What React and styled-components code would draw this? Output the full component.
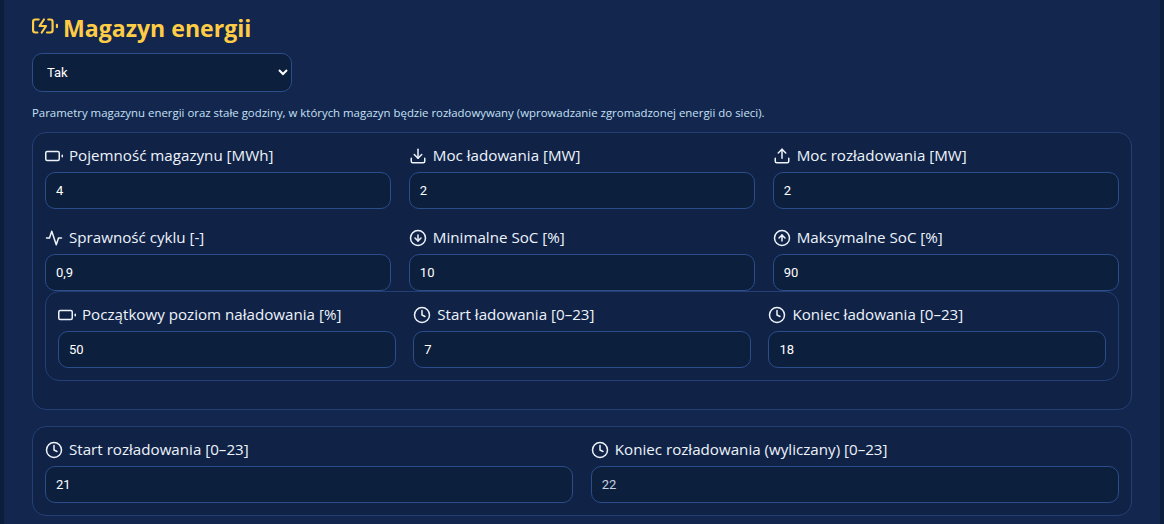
import styled, { createGlobalStyle } from "styled-components";

const GlobalStyle = createGlobalStyle`
  html, body { margin: 0; padding: 0; height: 100%; background: #0b1e3b; overflow: hidden; }
  body { font-family: "Open Sans", "Noto Sans", sans-serif; }
`;

const Page = styled.div`
  margin: 0 4px;
  height: 524px;
  background: #12264e;
  padding: 0 28px;
  box-sizing: border-box;
  overflow: hidden;
`;

const Title = styled.h2`
  display: flex;
  align-items: center;
  gap: 5px;
  margin: 0;
  padding-top: 16px;
  height: 39px;
  box-sizing: border-box;
  color: #ffcd45;
  font-size: 23.1px;
  font-weight: 700;
  font-family: "Open Sans", sans-serif;
  svg { flex: none; margin-top: -4px; }
`;

const SelectBox = styled.select`
  display: block;
  width: 260px;
  height: 39px;
  margin-top: 14px;
  padding: 0 10px;
  background: #0c1f3d;
  border: 1px solid #2b4d8a;
  border-radius: 10px;
  color: #fff;
  font: 400 13px Roboto, sans-serif;
`;

const Hint = styled.p`
  margin: 13px 0 11px;
  color: #c5e0f5;
  font: 400 11.42px/16px "Open Sans", sans-serif;
`;

const Card = styled.section`
  background: #102347;
  border: 1px solid #233f74;
  border-radius: 14px;
  padding: ${(p) => p.$pad || "12px"};
  margin-bottom: ${(p) => p.$mb || "16px"};
`;

const Grid = styled.div`
  display: grid;
  grid-template-columns: repeat(${(p) => p.$cols}, 1fr);
  column-gap: 17.6px;
  row-gap: ${(p) => p.$rowGap || "0"};
`;

const Field = styled.div`
  display: flex;
  flex-direction: column;
  min-width: 0;
`;

const Label = styled.label`
  display: flex;
  align-items: center;
  gap: 6px;
  height: 22px;
  box-sizing: border-box;
  padding-bottom: 2px;
  margin-bottom: 5px;
  color: #eef3fb;
  font-size: 15.15px;
  white-space: nowrap;
  svg { flex: none; margin-top: 2px; }
`;

const Input = styled.input`
  width: 100%;
  height: 37px;
  box-sizing: border-box;
  padding: 0 10px;
  background: #0c1f3d;
  border: 1px solid #2b4d8a;
  border-radius: 10px;
  color: ${(p) => (p.readOnly ? "#c6d2e2" : "#fff")};
  font: 400 13px Roboto, sans-serif;
  outline: none;
`;

const Icon = ({ children, size = 18, sw = 2 }) => (
  <svg width={size} height={size} viewBox="0 0 24 24" fill="none" stroke="currentColor" strokeWidth={sw} strokeLinecap="round" strokeLinejoin="round">
    {children}
  </svg>
);

const Battery = () => (
  <Icon><rect x="1" y="6" width="18" height="12" rx="2" /><line x1="23" y1="13" x2="23" y2="11" /></Icon>
);
const Download = () => (
  <Icon><path d="M21 15v4a2 2 0 0 1-2 2H5a2 2 0 0 1-2-2v-4" /><polyline points="7 10 12 15 17 10" /><line x1="12" y1="15" x2="12" y2="3" /></Icon>
);
const Upload = () => (
  <Icon><path d="M21 15v4a2 2 0 0 1-2 2H5a2 2 0 0 1-2-2v-4" /><polyline points="17 8 12 3 7 8" /><line x1="12" y1="3" x2="12" y2="15" /></Icon>
);
const Activity = () => (
  <Icon><polyline points="22 12 18 12 15 21 9 3 6 12 2 12" /></Icon>
);
const ArrowDown = () => (
  <Icon><circle cx="12" cy="12" r="10" /><polyline points="8 12 12 16 16 12" /><line x1="12" y1="8" x2="12" y2="16" /></Icon>
);
const ArrowUp = () => (
  <Icon><circle cx="12" cy="12" r="10" /><polyline points="16 12 12 8 8 12" /><line x1="12" y1="16" x2="12" y2="8" /></Icon>
);
const Clock = () => (
  <Icon><circle cx="12" cy="12" r="10" /><polyline points="12 6 12 12 16 14" /></Icon>
);
const BatteryCharging = () => (
  <svg width="26" height="26" viewBox="0 0 24 24" fill="none" stroke="currentColor" strokeWidth="2" strokeLinecap="round" strokeLinejoin="round">
    <path d="M5 18H3a2 2 0 0 1-2-2V8a2 2 0 0 1 2-2h3.19" />
    <path d="M15 6h2a2 2 0 0 1 2 2v8a2 2 0 0 1-2 2h-3.19" />
    <line x1="23" y1="13" x2="23" y2="11" />
    <polyline points="11 6 7 12 13 12 9 18" />
  </svg>
);

const NumberField = ({ icon, label, value, readOnly }) => (
  <Field>
    <Label>{icon}{label}</Label>
    <Input defaultValue={value} readOnly={readOnly} />
  </Field>
);

const App = () => (
  <>
    <GlobalStyle />
    <Page>
      <Title><BatteryCharging />Magazyn energii</Title>
      <SelectBox defaultValue="Tak">
        <option>Tak</option>
        <option>Nie</option>
      </SelectBox>
      <Hint>Parametry magazynu energii oraz stałe godziny, w których magazyn będzie rozładowywany (wprowadzanie zgromadzonej energii do sieci).</Hint>
      <Card $pad="12px 12px 28px">
        <Grid $cols={3} $rowGap="18px">
          <NumberField icon={<Battery />} label="Pojemność magazynu [MWh]" value="4" />
          <NumberField icon={<Download />} label="Moc ładowania [MW]" value="2" />
          <NumberField icon={<Upload />} label="Moc rozładowania [MW]" value="2" />
          <NumberField icon={<Activity />} label="Sprawność cyklu [-]" value="0,9" />
          <NumberField icon={<ArrowDown />} label="Minimalne SoC [%]" value="10" />
          <NumberField icon={<ArrowUp />} label="Maksymalne SoC [%]" value="90" />
        </Grid>
        <Card $pad="12px" $mb="0">
          <Grid $cols={3}>
            <NumberField icon={<Battery />} label="Początkowy poziom naładowania [%]" value="50" />
            <NumberField icon={<Clock />} label="Start ładowania [0–23]" value="7" />
            <NumberField icon={<Clock />} label="Koniec ładowania [0–23]" value="18" />
          </Grid>
        </Card>
      </Card>
      <Card $mb="0">
        <Grid $cols={2}>
          <NumberField icon={<Clock />} label="Start rozładowania [0–23]" value="21" />
          <NumberField icon={<Clock />} label="Koniec rozładowania (wyliczany) [0–23]" value="22" readOnly />
        </Grid>
      </Card>
    </Page>
  </>
);

export default App;
